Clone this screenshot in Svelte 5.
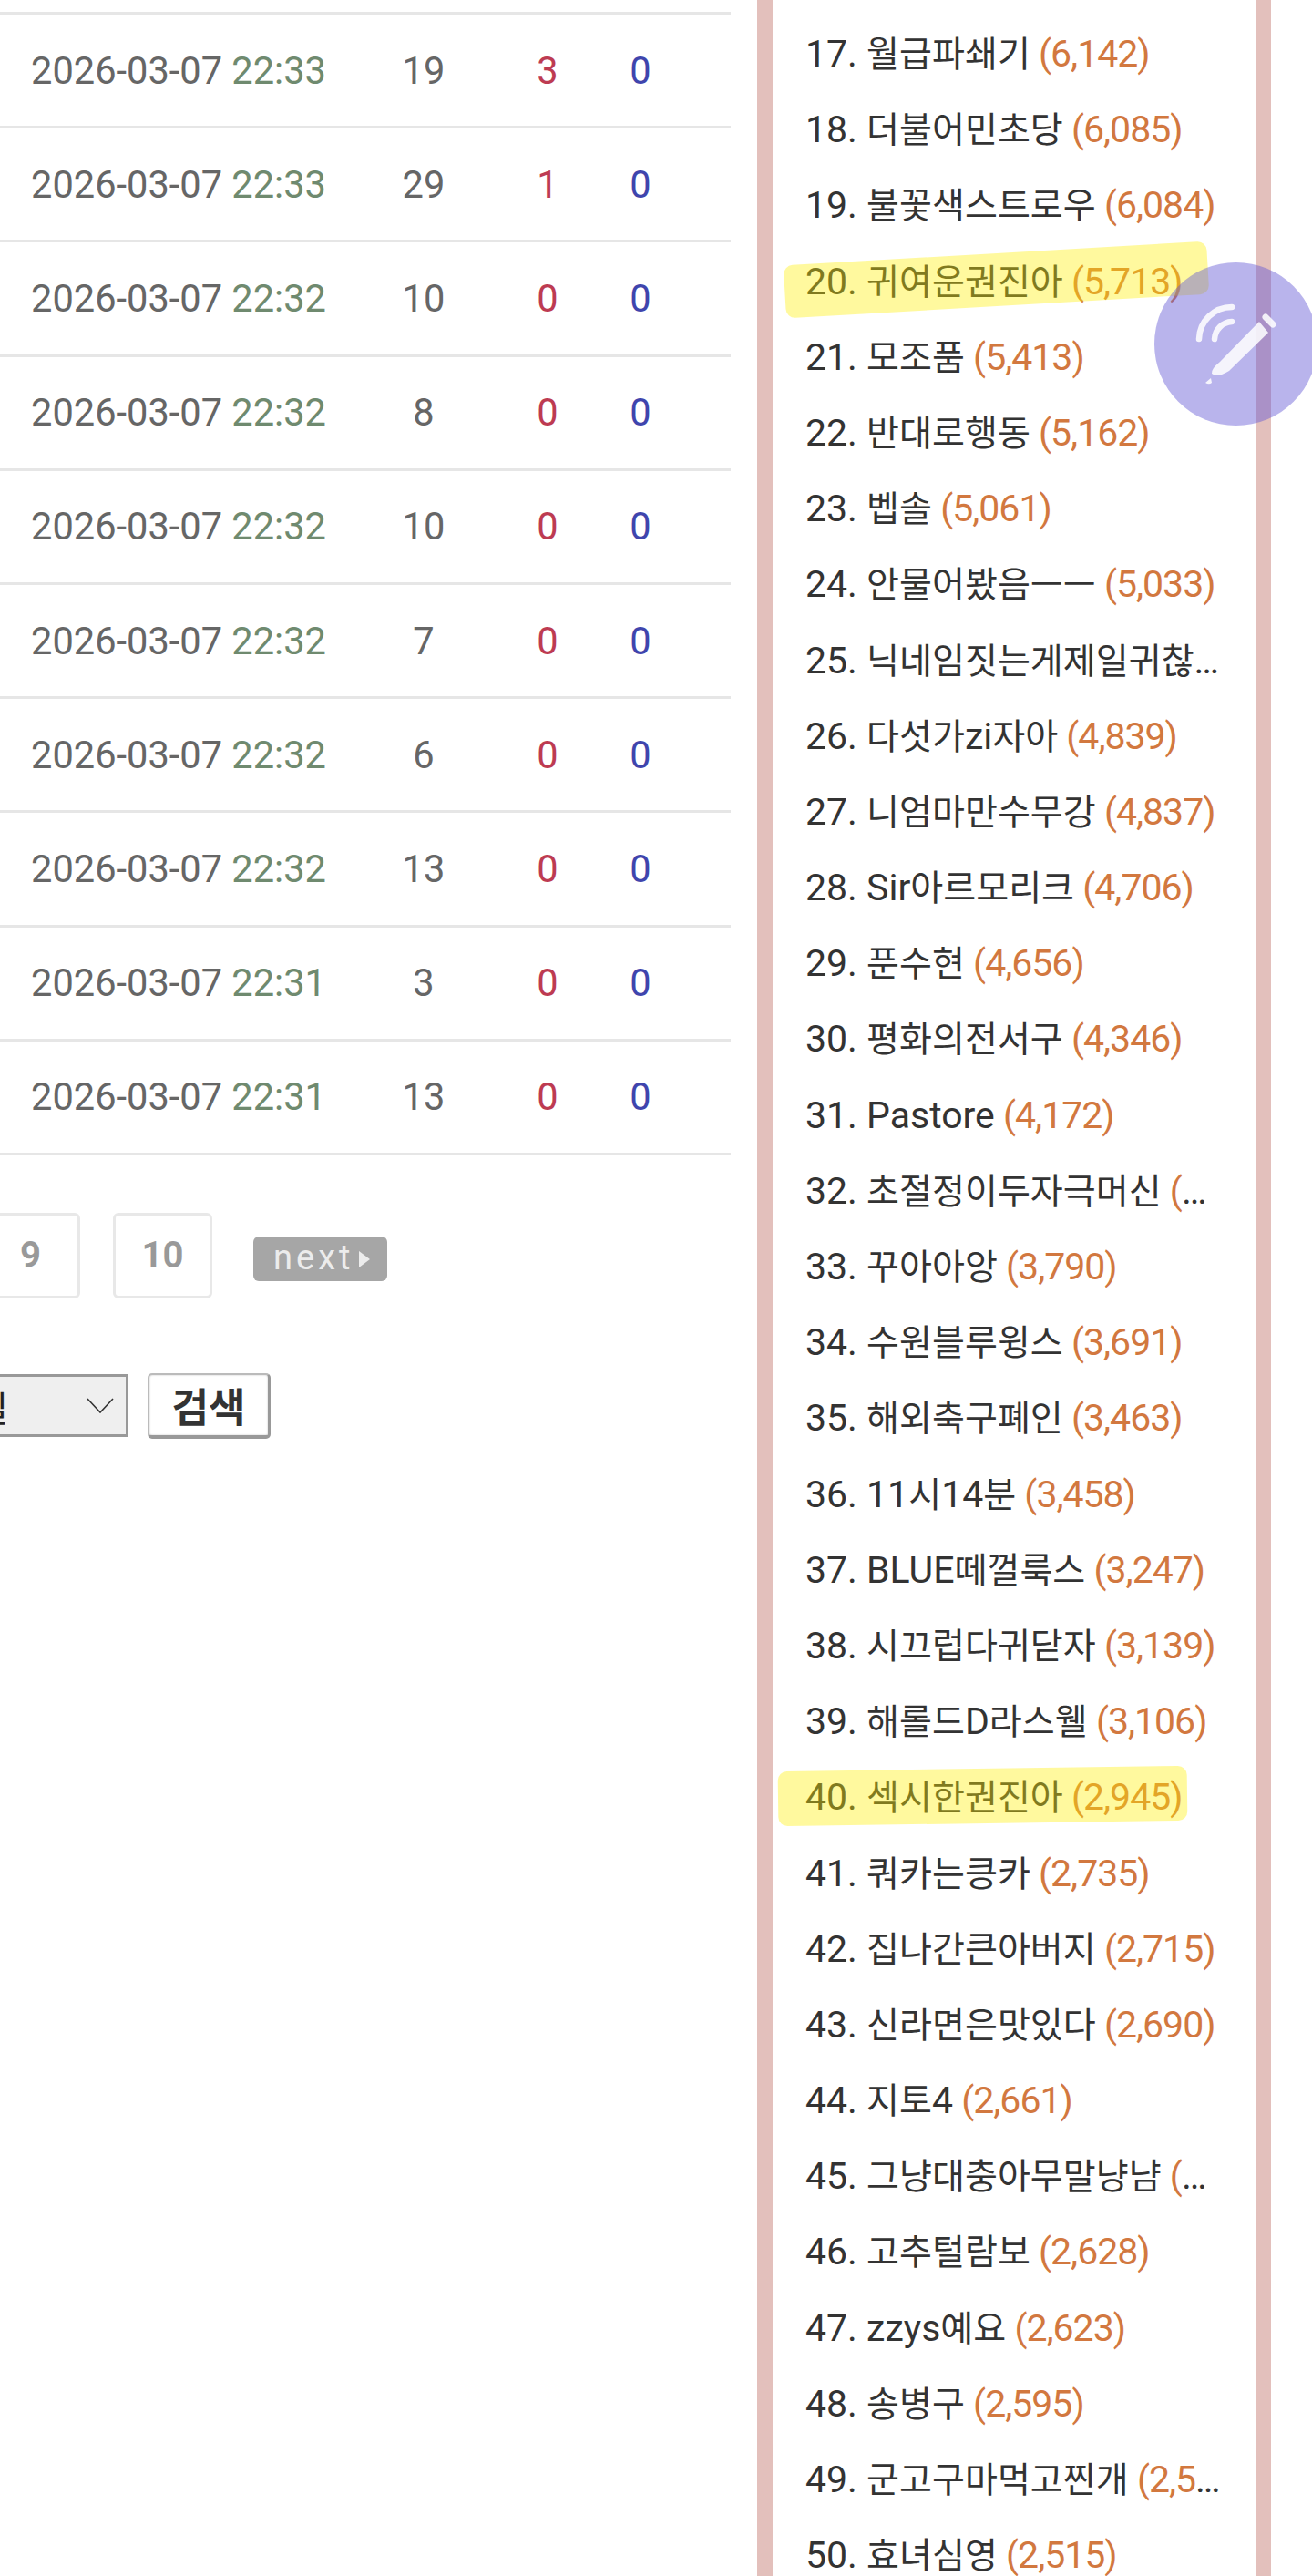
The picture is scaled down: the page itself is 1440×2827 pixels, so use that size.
<script lang="ts">
	interface Post {
		day: string;
		time: string;
		hits: number;
		up: number;
		down: number;
	}

	interface Rank {
		n: number;
		name: string;
		count?: string;
		cut?: boolean; // name or count ran out of room in the source page
		mark?: 'a' | 'b';
	}

	const posts: Post[] = [
		{ day: '2026-03-07', time: '22:33', hits: 19, up: 3, down: 0 },
		{ day: '2026-03-07', time: '22:33', hits: 29, up: 1, down: 0 },
		{ day: '2026-03-07', time: '22:32', hits: 10, up: 0, down: 0 },
		{ day: '2026-03-07', time: '22:32', hits: 8, up: 0, down: 0 },
		{ day: '2026-03-07', time: '22:32', hits: 10, up: 0, down: 0 },
		{ day: '2026-03-07', time: '22:32', hits: 7, up: 0, down: 0 },
		{ day: '2026-03-07', time: '22:32', hits: 6, up: 0, down: 0 },
		{ day: '2026-03-07', time: '22:32', hits: 13, up: 0, down: 0 },
		{ day: '2026-03-07', time: '22:31', hits: 3, up: 0, down: 0 },
		{ day: '2026-03-07', time: '22:31', hits: 13, up: 0, down: 0 }
	];

	const ranks: Rank[] = [
		{ n: 17, name: '월급파쇄기', count: '(6,142)' },
		{ n: 18, name: '더불어민초당', count: '(6,085)' },
		{ n: 19, name: '불꽃색스트로우', count: '(6,084)' },
		{ n: 20, name: '귀여운권진아', count: '(5,713)', mark: 'a' },
		{ n: 21, name: '모조품', count: '(5,413)' },
		{ n: 22, name: '반대로행동', count: '(5,162)' },
		{ n: 23, name: '벱솔', count: '(5,061)' },
		{ n: 24, name: '안물어봤음ㅡㅡ', count: '(5,033)' },
		{ n: 25, name: '닉네임짓는게제일귀찮', cut: true },
		{ n: 26, name: '다섯가zi자아', count: '(4,839)' },
		{ n: 27, name: '니엄마만수무강', count: '(4,837)' },
		{ n: 28, name: 'Sir아르모리크', count: '(4,706)' },
		{ n: 29, name: '푼수현', count: '(4,656)' },
		{ n: 30, name: '평화의전서구', count: '(4,346)' },
		{ n: 31, name: 'Pastore', count: '(4,172)' },
		{ n: 32, name: '초절정이두자극머신', count: '(', cut: true },
		{ n: 33, name: '꾸아아앙', count: '(3,790)' },
		{ n: 34, name: '수원블루윙스', count: '(3,691)' },
		{ n: 35, name: '해외축구폐인', count: '(3,463)' },
		{ n: 36, name: '11시14분', count: '(3,458)' },
		{ n: 37, name: 'BLUE떼껄룩스', count: '(3,247)' },
		{ n: 38, name: '시끄럽다귀닫자', count: '(3,139)' },
		{ n: 39, name: '해롤드D라스웰', count: '(3,106)' },
		{ n: 40, name: '섹시한권진아', count: '(2,945)', mark: 'b' },
		{ n: 41, name: '쿼카는킁카', count: '(2,735)' },
		{ n: 42, name: '집나간큰아버지', count: '(2,715)' },
		{ n: 43, name: '신라면은맛있다', count: '(2,690)' },
		{ n: 44, name: '지토4', count: '(2,661)' },
		{ n: 45, name: '그냥대충아무말냥냠', count: '(', cut: true },
		{ n: 46, name: '고추털람보', count: '(2,628)' },
		{ n: 47, name: 'zzys예요', count: '(2,623)' },
		{ n: 48, name: '송병구', count: '(2,595)' },
		{ n: 49, name: '군고구마먹고찐개', count: '(2,5', cut: true },
		{ n: 50, name: '효녀심영', count: '(2,515)' }
	];

	// Hangul sits a little smaller than the Latin text around it
	function parts(name: string) {
		const runs = name.match(/[가-힣ㄱ-ㅣ]+|[^가-힣ㄱ-ㅣ]+/g) ?? [];
		return runs.map((text) => ({ text, ko: /[가-힣ㄱ-ㅣ]/.test(text) }));
	}
</script>

<div class="page">
	<main class="board">
		<div class="rows">
			{#each posts as post}
				<div class="row">
					<span class="when">{post.day} <span class="time">{post.time}</span></span>
					<span>{post.hits}</span>
					<span class="up">{post.up}</span>
					<span class="down">{post.down}</span>
				</div>
			{/each}
		</div>

		<nav class="pager">
			<a class="num">9</a>
			<a class="num">10</a>
			<a class="next">next<i class="tri"></i></a>
		</nav>

		<form class="search">
			<div class="select">
				<span class="ko">일</span>
				<svg width="30" height="17" viewBox="0 0 30 17" fill="none">
					<path d="M1 1l14 15L29 1" stroke="#333" stroke-width="1.6" />
				</svg>
			</div>
			<button type="button" class="go">검색</button>
		</form>
	</main>

	<aside class="panel">
		<ol class="ranks">
			{#each ranks as r}
				<li>
					{r.n}.
					{#each parts(r.name) as p}<span class:ko={p.ko}>{p.text}</span>{/each}{#if r.count}{' '}<span class="count">{r.count}</span>{/if}{#if r.cut}…{/if}
					{#if r.mark}<span class="mark mark-{r.mark}"></span>{/if}
				</li>
			{/each}
		</ol>
	</aside>

	<button type="button" class="fab" aria-label="글쓰기">
		<svg width="179" height="179" viewBox="28 28 179 179" fill="none">
			<g stroke="#fff" stroke-opacity="0.85" stroke-width="6.500" stroke-linecap="round">
				<path d="M77 112A36 36 0 0 1 113 77" />
				<path d="M94 112A20 20 0 0 1 113 93" />
				<path d="M150 88l8 8" stroke-width="7" />
			</g>
			<path
				d="M143 93l10 12-43 42q-13 8-19 3-1-5 9-13zM84 160l6-5 1 5q-3 2.500-7 0z"
				fill="#fff"
				fill-opacity="0.85"
			/>
		</svg>
	</button>
</div>

<style>
	:global(body) {
		margin: 0;
		background: #fff;
	}

	.page {
		position: relative;
		display: flex;
		width: 1440px;
		height: 2827px;
		overflow: hidden;
		background: #fff;
		font-family: Roboto, 'Noto Sans CJK KR', sans-serif;
		font-size: 41px;
		color: #333;
	}

	.ko {
		font-size: 39.100px;
	}

	.board {
		flex: none;
		width: 802px;
		overflow: hidden;
	}

	.rows {
		padding-top: 13px;
	}

	.row {
		display: grid;
		grid-template-columns: 389px 152px 120px 84px;
		align-items: center;
		box-sizing: border-box;
		height: 125.2px;
		font-size: 41.6px;
		color: #666;
		text-align: center;
		border-bottom: 3px solid #e6e6e6;
	}

	.row:first-child {
		height: 128.2px;
		border-top: 3px solid #e6e6e6;
	}

	.when {
		padding-left: 3px;
	}

	.time {
		color: #6f8a6f;
	}

	.up {
		color: #bd3b52;
	}

	.down {
		color: #3f45ad;
	}

	.pager {
		display: flex;
		align-items: center;
		gap: 36px;
		margin: 63px 0 0 -21px;
	}

	.num {
		box-sizing: border-box;
		width: 109px;
		height: 94px;
		border: 3px solid #e8e8e8;
		border-radius: 6px;
		font-size: 40px;
		font-weight: 700;
		line-height: 88px;
		text-align: center;
		color: #999;
	}

	.next {
		display: flex;
		align-items: center;
		box-sizing: border-box;
		width: 147px;
		height: 49px;
		margin: 8px 0 0 9px;
		padding: 0 0 4px 22px;
		border-radius: 6px;
		background: #a6a6a6;
		font-size: 38px;
		font-weight: 400;
		letter-spacing: 4px;
		line-height: 1;
		color: #ececec;
	}

	.tri {
		width: 0;
		height: 0;
		margin: 4px 0 0 6px;
		border-left: 12px solid #ececec;
		border-top: 9px solid transparent;
		border-bottom: 9px solid transparent;
	}

	.search {
		display: flex;
		align-items: center;
		gap: 21px;
		margin: 82px 0 0 -30px;
	}

	.select {
		display: flex;
		align-items: center;
		justify-content: space-between;
		box-sizing: border-box;
		width: 171px;
		height: 69px;
		padding-right: 13px;
		border: 3px solid #999;
		background: #efefef;
	}

	.select .ko {
		margin-left: 0;
		color: #222;
	}

	.go {
		box-sizing: border-box;
		width: 135px;
		height: 72px;
		padding: 0;
		border: 2px solid #bbb;
		border-right: 3px solid #999;
		border-bottom: 4px solid #999;
		border-radius: 5px;
		background: #fff;
		box-shadow: inset 0 0 2px #bbb;
		font-family: 'Noto Sans CJK KR', sans-serif;
		font-size: 44px;
		font-weight: 700;
		line-height: 1;
		color: #333;
	}

	.panel {
		flex: none;
		box-sizing: border-box;
		width: 564px;
		margin-left: 29px;
		border-left: 17px solid #e3c0bc;
		border-right: 17px solid #e3c0bc;
	}

	.ranks {
		margin: 0;
		padding: 18px 0 0 36px;
		list-style: none;
	}

	.ranks li {
		position: relative;
		height: 83.2px;
		line-height: 83.2px;
		white-space: nowrap;
	}

	.count {
		margin-left: -1px;
		letter-spacing: -1px;
		color: #d2783f;
	}

	/* highlighter strokes drawn over the text */
	.mark {
		position: absolute;
		border-radius: 10px;
		background: rgba(255, 240, 0, 0.38);
	}

	.mark-a {
		left: -23px;
		top: 10.500px;
		width: 465px;
		height: 58px;
		transform: rotate(-3.3deg);
	}

	.mark-b {
		left: -30px;
		top: 9.500px;
		width: 449px;
		height: 60px;
		transform: rotate(-0.8deg);
	}

	.fab {
		position: absolute;
		left: 1267px;
		top: 288px;
		width: 179px;
		height: 179px;
		padding: 0;
		border: 0;
		border-radius: 50%;
		background: rgba(100, 89, 213, 0.45);
	}

	.fab svg {
		display: block;
	}
</style>
